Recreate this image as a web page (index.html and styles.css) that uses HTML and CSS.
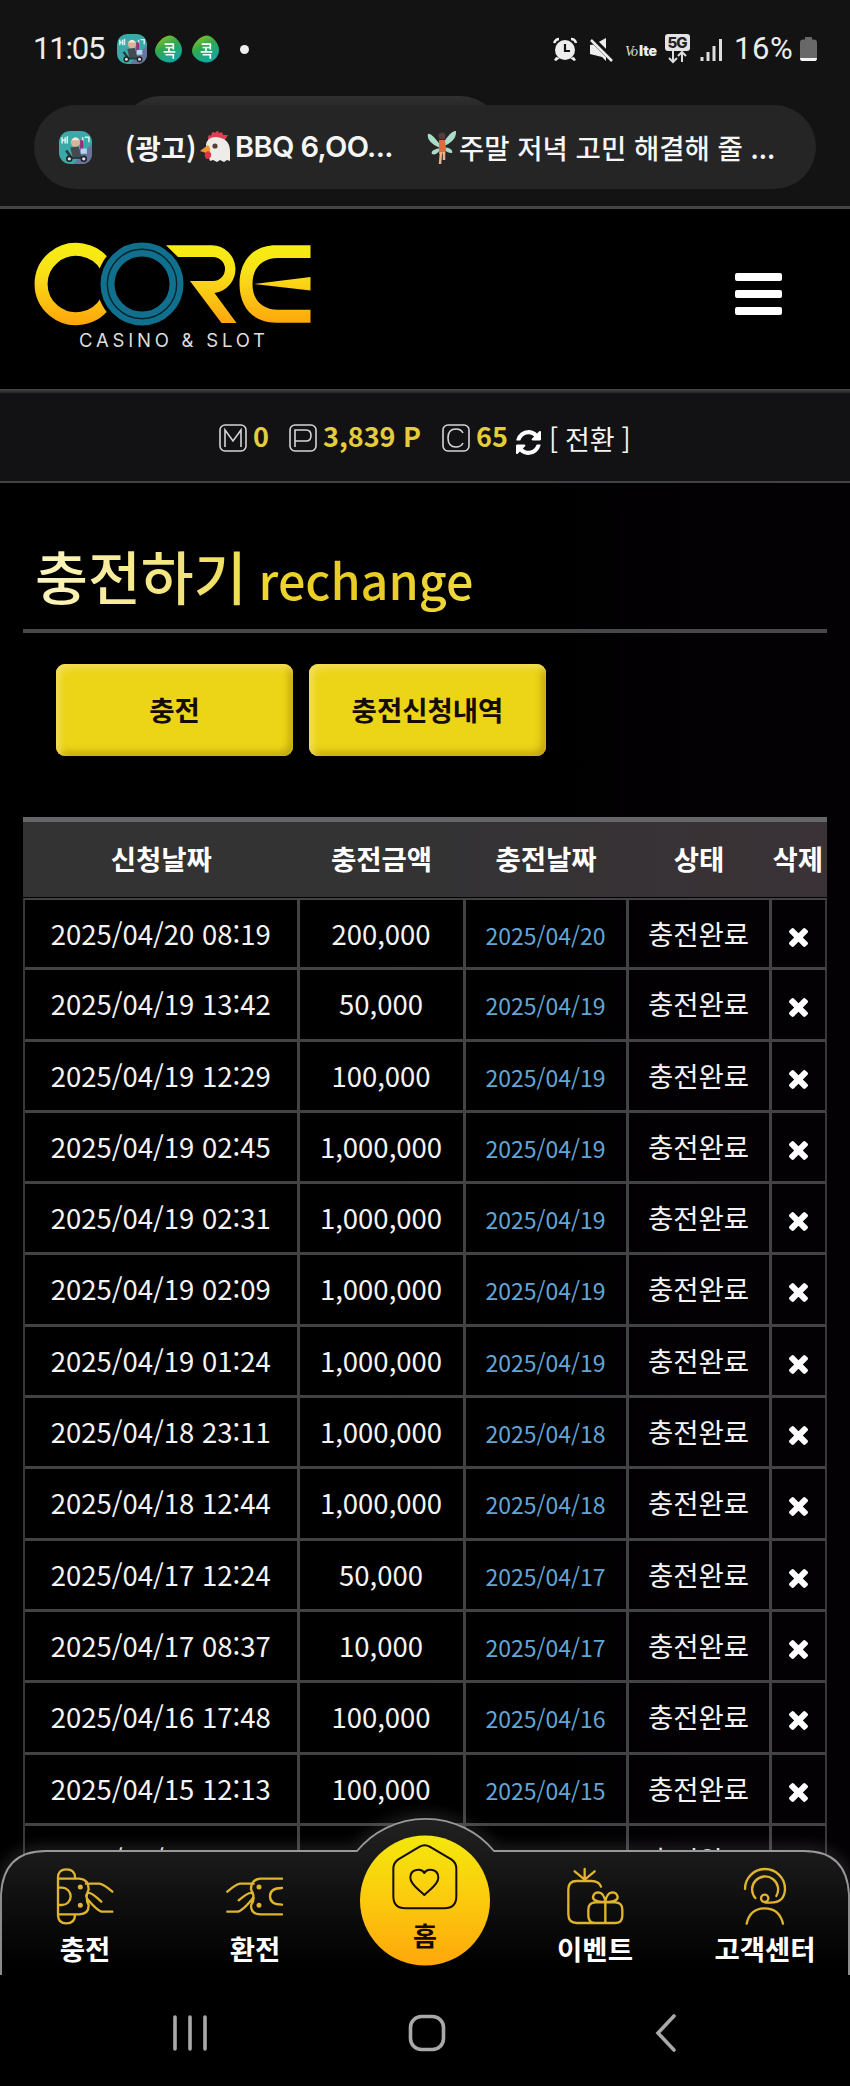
FILE: index.html
```html
<!DOCTYPE html>
<html lang="ko">
<head>
<meta charset="utf-8">
<title>CORE 충전하기</title>
<link rel="stylesheet" href="styles.css">
</head>
<body>
<svg width="0" height="0" class="defs">
  <defs>
    <linearGradient id="gold" x1="0" y1="243" x2="0" y2="325" gradientUnits="userSpaceOnUse"><stop offset="0" stop-color="#f7ee12"/><stop offset=".35" stop-color="#f8e119"/><stop offset="1" stop-color="#ffa50c"/></linearGradient>
    <linearGradient id="leaf" x1="0" y1="0" x2=".5" y2="1"><stop offset="0" stop-color="#a3c81e"/><stop offset=".5" stop-color="#31a84f"/><stop offset="1" stop-color="#11a8a0"/></linearGradient>
    <symbol id="times" viewBox="110 366 1188 1188"><path d="M1298 1322q0 40-28 68l-136 136q-28 28-68 28t-68-28l-294-294-294 294q-28 28-68 28t-68-28l-136-136q-28-28-28-68t28-68l294-294-294-294q-28-28-28-68t28-68l136-136q28-28 68-28t68 28l294 294 294-294q28-28 68-28t68 28l136 136q28 28 28 68t-28 68l-294 294 294 294q28 28 28 68z"/></symbol>
    <symbol id="rider" viewBox="0 0 32 32"><rect width="32" height="32" rx="11" fill="#3ba9a8"/><path d="M14 32L32 12v9q0 11-11 11z" fill="#68749d"/><path d="M3 6v6M6 6v6M3 9h3M8 5v7M25 6h4v5M23 6v5" stroke="#d5f3f1" stroke-width="1.5" fill="none"/><circle cx="16" cy="11" r="4.5" fill="#d8b39a"/><path d="M12 9q4-6 8 0z" fill="#efe9df"/><path d="M11 16l8-1 3 10h-9z" fill="#454a50"/><path d="M22 9v10" stroke="#9b2d78" stroke-width="3"/><rect x="21" y="17" width="6" height="5" fill="#b9d3ef"/><path d="M7 19l5 7h12" stroke="#273b44" stroke-width="2.5" fill="none"/><circle cx="10" cy="27" r="2.4" fill="#ddd" stroke="#222" stroke-width="1.5"/><circle cx="24" cy="27" r="2.4" fill="#ddd" stroke="#222" stroke-width="1.5"/></symbol>
    <symbol id="drop" viewBox="0 0 28 28"><path d="M15 0c6 0 13 8 13 15s-6 13-13 13S0 22 0 16C0 9 9 0 15 0z" fill="url(#leaf)"/><path d="M10 9h9v5.500M11 12.500h8M14.500 13v4M9 17h12M11 20h8v4" stroke="#fff" stroke-width="1.700" fill="none"/></symbol>
  </defs>
</svg>

<section class="system-top">
  <div class="status">
    <span class="clock">11:05</span>
    <svg class="app" width="30" height="30"><use href="#rider"/></svg>
    <svg class="leaf" width="27" height="28"><use href="#drop"/></svg>
    <svg class="leaf" width="27" height="28"><use href="#drop"/></svg>
    <i class="dot"></i>
    <svg class="signals" width="172" height="32" viewBox="553 32 172 32">
      <g fill="#eee">
        <circle cx="565" cy="49" r="10"/>
        <path d="M556 56l-2 3 2 1 4-3zM574 56l2 3-2 1-4-3z"/>
        <path d="M590 44l4-.5L606 37V60L602 56l-4-1-8-2z"/>
      </g>
      <path d="M565 43v7h5" stroke="#131313" stroke-width="2.200" fill="none"/>
      <path d="M554 42q2-4 5-4M571 38q4 0 5 4" stroke="#eee" stroke-width="2.500" fill="none"/>
      <path d="M592 38L614 60" stroke="#131313" stroke-width="6"/><path d="M591 39L612 60" stroke="#eee" stroke-width="2.500"/>
      <text x="625" y="55" class="vo" textLength="13">Vo</text>
      <text x="639" y="55" class="lte" textLength="18">lte</text>
      <rect x="665" y="33" width="25" height="17" rx="3" fill="#e4e4e4"/>
      <text x="667.500" y="47" class="five" textLength="20">5G</text>
      <path d="M673 50v11M669 57l4 4 4-4M682 61V51M678 55l4-4 4 4" stroke="#ddd" stroke-width="2" fill="none"/>
      <path d="M702 56v4M708 51v9M714 45v15M720.500 38v22" stroke="#ddd" stroke-width="3"/>
    </svg>
    <span class="percent">16%</span>
    <svg class="battery" width="17" height="26" viewBox="0 0 17 26"><path d="M5 1h7v2.500h2q3 0 3 3V22H0V6.500q0-3 3-3h2z" fill="#686868"/><path d="M0 22h17q0 3-2 3H2q-2 0-2-3z" fill="#f5f5f5"/></svg>
  </div>
  <div class="pill-back"></div>
  <div class="pill">
    <svg class="pill-app" width="33" height="33"><use href="#rider"/></svg>
    <span class="ad">(광고)</span>
    <svg class="chicken" width="31" height="32" viewBox="0 0 31 32"><path d="M8 9Q8 2 11 5q1-6 4-3 3-4 4 0 4-2 4 2l5 0-3 5z" fill="#dc4050"/><path d="M6 14Q7 6 16 6q13 1 14 13v11l-3-1-3 2-4-2-3 2-4-2-3 1q-2-6-4-16z" fill="#eeece8"/><path d="M8 14l-8 6 9 3q3-5-1-9z" fill="#ef972b"/><path d="M5 22q-1 6 3 6 4-1 3-6l-3-2z" fill="#d83545"/><circle cx="15" cy="15" r="2.600" fill="#594037"/></svg>
    <b class="brand">BBQ 6,OO...</b>
    <svg class="fairy" width="30" height="35" viewBox="0 0 30 35"><path d="M14 16Q4 2 1 4q-2 8 12 14-10 2-8 6 5 2 9-6zM15 15Q24 0 29 1q1 10-14 16 12 1 10 6-6 0-10-6z" fill="#a9dccb"/><circle cx="15" cy="6" r="3.500" fill="#533c3a"/><path d="M12 10h6l1 10-1 4h-6z" fill="#dc6d38"/><path d="M14 22l-1 12M17 22v8" stroke="#e7b291" stroke-width="2.500"/></svg>
    <span class="headline">주말 저녁 고민 해결해 줄 ...</span>
  </div>
</section>

<header class="site-header">
  <svg class="logo" width="282" height="112" viewBox="33 241 282 112">
    <path d="M106.300 266.500A35 34.700 0 1 0 106.300 301.500" fill="none" stroke="url(#gold)" stroke-width="13"/>
    <circle cx="142" cy="284" r="45" fill="#000"/>
    <path d="M166 245.200H212A24 24 0 0 1 214.500 293L236.500 323H221.500L190 281H213A12 12 0 0 0 213 257H178Z" fill="url(#gold)"/>
    <path d="M310.500 245.200H276C253 245.200 239.500 261 239.500 284S253 322.700 276 322.700H310.500V309.800H278C262 309.800 252.500 300 252.500 284S262 258 278 258H310.500ZM254 284L310.500 277V290.500Z" fill="url(#gold)"/>
    <circle cx="142" cy="284" r="34.500" fill="none" stroke="#11708e" stroke-width="14"/>
    <circle cx="142" cy="284" r="34.700" fill="none" stroke="#06242e" stroke-width="1.400"/>
    <text x="79" y="346.500" class="tagline" textLength="186">CASINO &amp; SLOT</text>
  </svg>
  <div class="menu"><i></i><i></i><i></i></div>
</header>

<div class="balance">
  <svg class="coin" viewBox="0 0 28 28"><rect x="1" y="1" width="26" height="26" rx="5"/><path d="M6 23V6l8 11 8-11v17"/></svg>
  <b class="money">0</b>
  <svg class="coin" viewBox="0 0 28 28"><rect x="1" y="1" width="26" height="26" rx="5"/><path d="M6 23V6h11q5 0 5 5.500t-5 5.500H6"/></svg>
  <b class="points">3,839 P</b>
  <svg class="coin" viewBox="0 0 28 28"><rect x="1" y="1" width="26" height="26" rx="5"/><path d="M21 9q-2-4-7-4-8 0-8 9t8 9q5 0 7-4"/></svg>
  <b class="coupon">65</b>
  <svg class="refresh" width="25" height="25" viewBox="0 128 1536 1536"><path d="M1511 1056q0 5-1 7-64 268-268 434.500t-478 166.500q-146 0-282.500-55t-243.500-157l-129 129q-19 19-45 19t-45-19-19-45v-448q0-26 19-45t45-19h448q26 0 45 19t19 45-19 45l-137 137q71 66 161 102t187 36q134 0 250-65t186-179q11-17 53-117 8-23 30-23h192q13 0 22.500 9.500t9.500 22.500zm25-800v448q0 26-19 45t-45 19h-448q-26 0-45-19t-19-45 19-45l138-138q-148-137-349-137-134 0-250 65t-186 179q-11 17-53 117-8 23-30 23h-199q-13 0-22.500-9.500t-9.500-22.500v-7q65-268 270-434.500t480-166.500q146 0 284 55.500t245 156.500l130-129q19-19 45-19t45 19 19 45z"/></svg>
  <span class="convert">[ 전환 ]</span>
</div>

<main class="content">
  <h1 class="title"><span class="ko">충전하기</span> <span class="en">rechange</span></h1>
  <div class="tabs"><div class="tab">충전</div><div class="tab">충전신청내역</div></div>
  <div class="table">
    <div class="head"><span>신청날짜</span><span>충전금액</span><span>충전날짜</span><span>상태</span><span>삭제</span></div>
    <div class="row"><span>2025/04/20 08:19</span><span>200,000</span><span class="day">2025/04/20</span><span>충전완료</span><span><svg><use href="#times"/></svg></span></div>
    <div class="row"><span>2025/04/19 13:42</span><span>50,000</span><span class="day">2025/04/19</span><span>충전완료</span><span><svg><use href="#times"/></svg></span></div>
    <div class="row"><span>2025/04/19 12:29</span><span>100,000</span><span class="day">2025/04/19</span><span>충전완료</span><span><svg><use href="#times"/></svg></span></div>
    <div class="row"><span>2025/04/19 02:45</span><span>1,000,000</span><span class="day">2025/04/19</span><span>충전완료</span><span><svg><use href="#times"/></svg></span></div>
    <div class="row"><span>2025/04/19 02:31</span><span>1,000,000</span><span class="day">2025/04/19</span><span>충전완료</span><span><svg><use href="#times"/></svg></span></div>
    <div class="row"><span>2025/04/19 02:09</span><span>1,000,000</span><span class="day">2025/04/19</span><span>충전완료</span><span><svg><use href="#times"/></svg></span></div>
    <div class="row"><span>2025/04/19 01:24</span><span>1,000,000</span><span class="day">2025/04/19</span><span>충전완료</span><span><svg><use href="#times"/></svg></span></div>
    <div class="row"><span>2025/04/18 23:11</span><span>1,000,000</span><span class="day">2025/04/18</span><span>충전완료</span><span><svg><use href="#times"/></svg></span></div>
    <div class="row"><span>2025/04/18 12:44</span><span>1,000,000</span><span class="day">2025/04/18</span><span>충전완료</span><span><svg><use href="#times"/></svg></span></div>
    <div class="row"><span>2025/04/17 12:24</span><span>50,000</span><span class="day">2025/04/17</span><span>충전완료</span><span><svg><use href="#times"/></svg></span></div>
    <div class="row"><span>2025/04/17 08:37</span><span>10,000</span><span class="day">2025/04/17</span><span>충전완료</span><span><svg><use href="#times"/></svg></span></div>
    <div class="row"><span>2025/04/16 17:48</span><span>100,000</span><span class="day">2025/04/16</span><span>충전완료</span><span><svg><use href="#times"/></svg></span></div>
    <div class="row"><span>2025/04/15 12:13</span><span>100,000</span><span class="day">2025/04/15</span><span>충전완료</span><span><svg><use href="#times"/></svg></span></div>
    <div class="row"><span>2025/04/15 11:57</span><span>50,000</span><span class="day">2025/04/15</span><span>충전완료</span><span><svg><use href="#times"/></svg></span></div>
  </div>
</main>

<div class="dock">
  <svg class="dock-shape" width="850" height="180" viewBox="0 1795 850 180">
    <defs>
      <linearGradient id="dockFill" x1="0" y1="1819" x2="0" y2="1975" gradientUnits="userSpaceOnUse"><stop offset="0" stop-color="#212121"/><stop offset=".25" stop-color="#191919"/><stop offset=".9" stop-color="#020202"/><stop offset="1" stop-color="#000"/></linearGradient>
      <linearGradient id="homeFill" x1="0" y1="0" x2="0" y2="1"><stop offset="0" stop-color="#f3e80c"/><stop offset=".45" stop-color="#fbcd0d"/><stop offset="1" stop-color="#ffa70b"/></linearGradient>
      <filter id="glow" x="-5%" y="-20%" width="110%" height="140%"><feGaussianBlur stdDeviation="7"/></filter>
    </defs>
    <path d="M1 1980V1895Q3 1851 46 1851H357A89 89 0 0 1 494 1851H804Q847 1851 849 1895V1980" fill="none" stroke="#888" stroke-opacity=".4" stroke-width="6" filter="url(#glow)"/>
    <path d="M1 1980V1895Q3 1851 46 1851H357A89 89 0 0 1 494 1851H804Q847 1851 849 1895V1980" fill="url(#dockFill)" stroke="#999" stroke-width="1.800"/>
    <circle cx="425" cy="1900.500" r="65" fill="url(#homeFill)"/>
  </svg>
  <nav class="items">
    <div class="item">
      <svg width="58" height="58" viewBox="168 260 174 174"><path d="M225 292q0-25-26-25-25 0-25 25V404q0 25 25 25 26 0 26-25M175 295H238q28 2 28 32-12 25 0 48 0 27-28 27H175M177 322h9a26 26 0 0 1 0 52h-9M258 310H298q14 2 39 24M337 394H307q-13 0-45-38-8-14 3-18 8-3 39 26"/><circle cx="241" cy="320" r="4"/><circle cx="241" cy="375" r="4"/></svg>
      <span>충전</span>
    </div>
    <div class="item">
      <svg width="58" height="58" viewBox="680 260 174 174"><path d="M848 295H783q-28 2-28 32 16 25 0 48 0 27 28 27H848M848 323q-36 0-36 25 0 25 36 25M684 334q25-22 38-24H763M684 394h30q13 0 45-38 8-14-3-18-8-3-38 22"/><circle cx="779" cy="320" r="4"/><circle cx="779" cy="375" r="4"/></svg>
      <span>환전</span>
    </div>
    <div class="item home">
      <svg width="66" height="66" viewBox="157 103 198 198"><path d="M240 111q15-9 30 0L335 149q15 10 15 28V260q0 36-36 36H197q-36 0-36-36V177q0-18 15-28zM254 190c-8-15-42-13-42 14 0 22 30 38 42 52 12-14 42-30 42-52 0-27-34-29-42-14z"/></svg>
      <span>홈</span>
    </div>
    <div class="item">
      <svg width="58" height="58" viewBox="423 260 174 174"><path d="M528 319q-5-17-30-17H455q-25 0-25 25V402q0 26 26 26H570q22 0 22-22V388q0-22-22-22H512q-22 0-22 22V406q0 22 22 22M479 299V266M479 298L449 273M479 298L509 273M541 366V428M541 365q-39 0-37-16 3-13 17-13 17 3 20 29 3-26 20-29 14 0 17 13 2 16-37 16"/></svg>
      <span>이벤트</span>
    </div>
    <div class="item">
      <svg width="58" height="58" viewBox="934 260 174 174"><path d="M961 326A60 60 0 1 1 1081 326Q1080 367 1037 367H1023M992 353A39 39 0 1 1 1055 347M966 430Q976 384 1020 384T1075 430"/><circle cx="1020" cy="354" r="11" class="open"/></svg>
      <span>고객센터</span>
    </div>
  </nav>
  <div class="system-nav">
    <svg width="34" height="38" viewBox="0 0 34 38"><path d="M2 3V35M17 3V35M32 3V35"/></svg>
    <svg width="38" height="38" viewBox="0 0 38 38"><rect x="2.500" y="2.500" width="33" height="33" rx="11"/></svg>
    <svg width="22" height="38" viewBox="0 0 22 38"><path d="M19 2L3 19 19 36"/></svg>
  </div>
</div>
</body>
</html>
```

FILE: styles.css
```css
* { box-sizing: border-box; }
body {
  margin: 0;
  width: 850px;
  height: 2086px;
  overflow: hidden;
  position: relative;
  background: linear-gradient(90deg, #000 45%, #040104);
  color: #f4f4f4;
  font-family: "Noto Sans CJK KR", sans-serif;
  font-size: 27.5px;
  white-space: nowrap;
}
svg { display: block; flex: none; }
.defs { position: absolute; }

.system-top {
  position: relative;
  height: 209px;
  background: #131313;
  border-bottom: 3px solid #444446;
}
.status {
  display: flex;
  align-items: center;
  height: 105px;
  padding: 0 33px 7px 33px;
}
.clock, .percent {
  font: 31px/40px Roboto, sans-serif;
  letter-spacing: -1.2px;
  color: #ededed;
}
.clock { width: 84px; }
.app { margin-right: 8px; }
.leaf { margin-right: 10px; }
.dot { width: 9px; height: 9px; margin-left: 11px; border-radius: 50%; background: #eee; }
.signals { margin-left: auto; }
.percent { margin-left: 9px; width: 66px; letter-spacing: .6px; }
.vo { font: italic 14px "Liberation Serif", serif; fill: #ddd; }
.lte { font: 900 14px Inter, sans-serif; fill: #eee; }
.five { font: 800 15px Inter, sans-serif; fill: #222; }
.pill-back {
  position: absolute;
  left: 119px;
  top: 96px;
  width: 383px;
  height: 60px;
  border-radius: 42px 42px 0 0;
  background: linear-gradient(#303030, #252525 14px);
}
.pill {
  position: relative;
  display: flex;
  align-items: center;
  width: 782px;
  height: 84px;
  margin-left: 34px;
  padding-left: 25px;
  border-radius: 42px;
  background: #252526;
  color: #f6f6f6;
}
.pill-app { margin-right: 33px; }
.ad { width: 75px; font-weight: 700; }
.chicken { margin-right: 4px; }
.brand { width: 192px; font: 600 29px/40px Inter, sans-serif; letter-spacing: -.6px; }
.fairy { margin-right: 2px; }
.headline { font-weight: 500; }

.site-header {
  display: flex;
  justify-content: space-between;
  height: 180px;
  padding: 32px 68px 0 33px;
  background: #000;
}
.tagline { font: 18.5px Inter, sans-serif; fill: #dedede; }
.menu { display: flex; flex-direction: column; gap: 9px; padding-top: 32px; }
.menu i { width: 47px; height: 8px; border-radius: 2px; background: #fff; }

.balance {
  display: flex;
  align-items: flex-start;
  height: 94px;
  padding: 31px 0 0 219px;
  background: linear-gradient(#48484a, #2c2c2e 3px, #121113 5px);
  border-bottom: 2px solid #424244;
  font-size: 27px;
  line-height: 40px;
}
.balance b { color: #e4cd3a; margin: -4px 0 0 6px; }
.coin { width: 28px; height: 28px; margin-top: 4px; fill: none; stroke: #d5d5d5; stroke-width: 1.6; }
.money { width: 36px; }
.points { width: 119px; }
.coupon { width: 40px; }
.refresh { margin-top: 10px; fill: #fff; }
.convert { margin: -1px 0 0 8px; letter-spacing: -.3px; }

.content { padding: 0 23px; }
.title {
  display: flex;
  align-items: baseline;
  gap: 12px;
  height: 150px;
  margin: 0;
  padding: 46px 0 0 12px;
  border-bottom: 4px solid #48484a;
  font-weight: 500;
  line-height: 92px;
}
.title span { -webkit-background-clip: text; background-clip: text; color: transparent; }
.ko { font-size: 57.5px; background-image: linear-gradient(90deg, #fcf6c2, #efdc58); }
.en { font-size: 48.5px; font-weight: 500; background-image: linear-gradient(90deg, #eed530, #e8ca22 50%, #efdb3f); }
.tabs { display: flex; gap: 16px; height: 184px; padding: 31px 0 0 33px; }
.tab {
  width: 237px;
  height: 92px;
  border-radius: 9px;
  background: #ecd417;
  box-shadow: inset 4px 4px 7px #f3df5c, inset -4px -4px 7px #bfa60c;
  color: #130d06;
  font-size: 27.5px;
  font-weight: 700;
  line-height: 91px;
  text-align: center;
}
.head, .row { display: grid; grid-template-columns: 274.5px 166px 163px 143px 55.5px; }
.head {
  height: 80px;
  padding-left: 1px;
  border-top: 5px solid #666567;
  background: linear-gradient(90deg, #333334 45%, #3a3236);
  color: #fff;
  font-weight: 700;
  line-height: 72px;
  text-align: center;
}
.head span:last-child { margin-left: -1px; }
.row {
  height: 71.3px;
  border-left: 2px solid #38383a;
  line-height: 67px;
  text-align: center;
}
.row span { border-right: 3px solid #434345; border-bottom: 3px solid #434345; height: 71.3px; }
.row span:last-child { border-right: 2px solid #38383a; }
.head + .row { border-top: 2px solid #434345; height: 72.3px; margin-top: 1px; }
.head + .row span { height: 70.3px; }
.row .day { color: #63a6d6; font-size: 23px; line-height: 71px; }
.row svg { width: 19px; height: 19px; margin: 28px auto 0; fill: #fff; }

.dock { position: absolute; left: 0; top: 1795px; width: 850px; height: 291px; }
.dock-shape { position: absolute; left: 0; top: 0; }
.items { position: relative; display: grid; grid-template-columns: repeat(5, 170px); height: 180px; }
.item {
  display: flex;
  flex-direction: column;
  align-items: center;
  padding-top: 72px;
  color: #fff;
  font-size: 27.5px;
  font-weight: 700;
  line-height: 47px;
}
.item svg { fill: none; stroke: #e0b42f; stroke-width: 7; stroke-linecap: round; stroke-linejoin: round; }
.item circle { fill: #e0b42f; }
.item .open { fill: none; }
.item.home { padding-top: 49px; color: #160b00; font-size: 26px; line-height: 49px; }
.item.home svg { stroke: #160b00; stroke-width: 6; }
.system-nav {
  position: relative;
  display: flex;
  align-items: center;
  gap: 201px;
  height: 111px;
  padding: 4px 0 0 173px;
  background: #000;
}
.system-nav svg { fill: none; stroke: #aaa8aa; stroke-width: 3.6; stroke-linecap: round; }
.system-nav svg:last-child { margin-left: 8px; }
```
